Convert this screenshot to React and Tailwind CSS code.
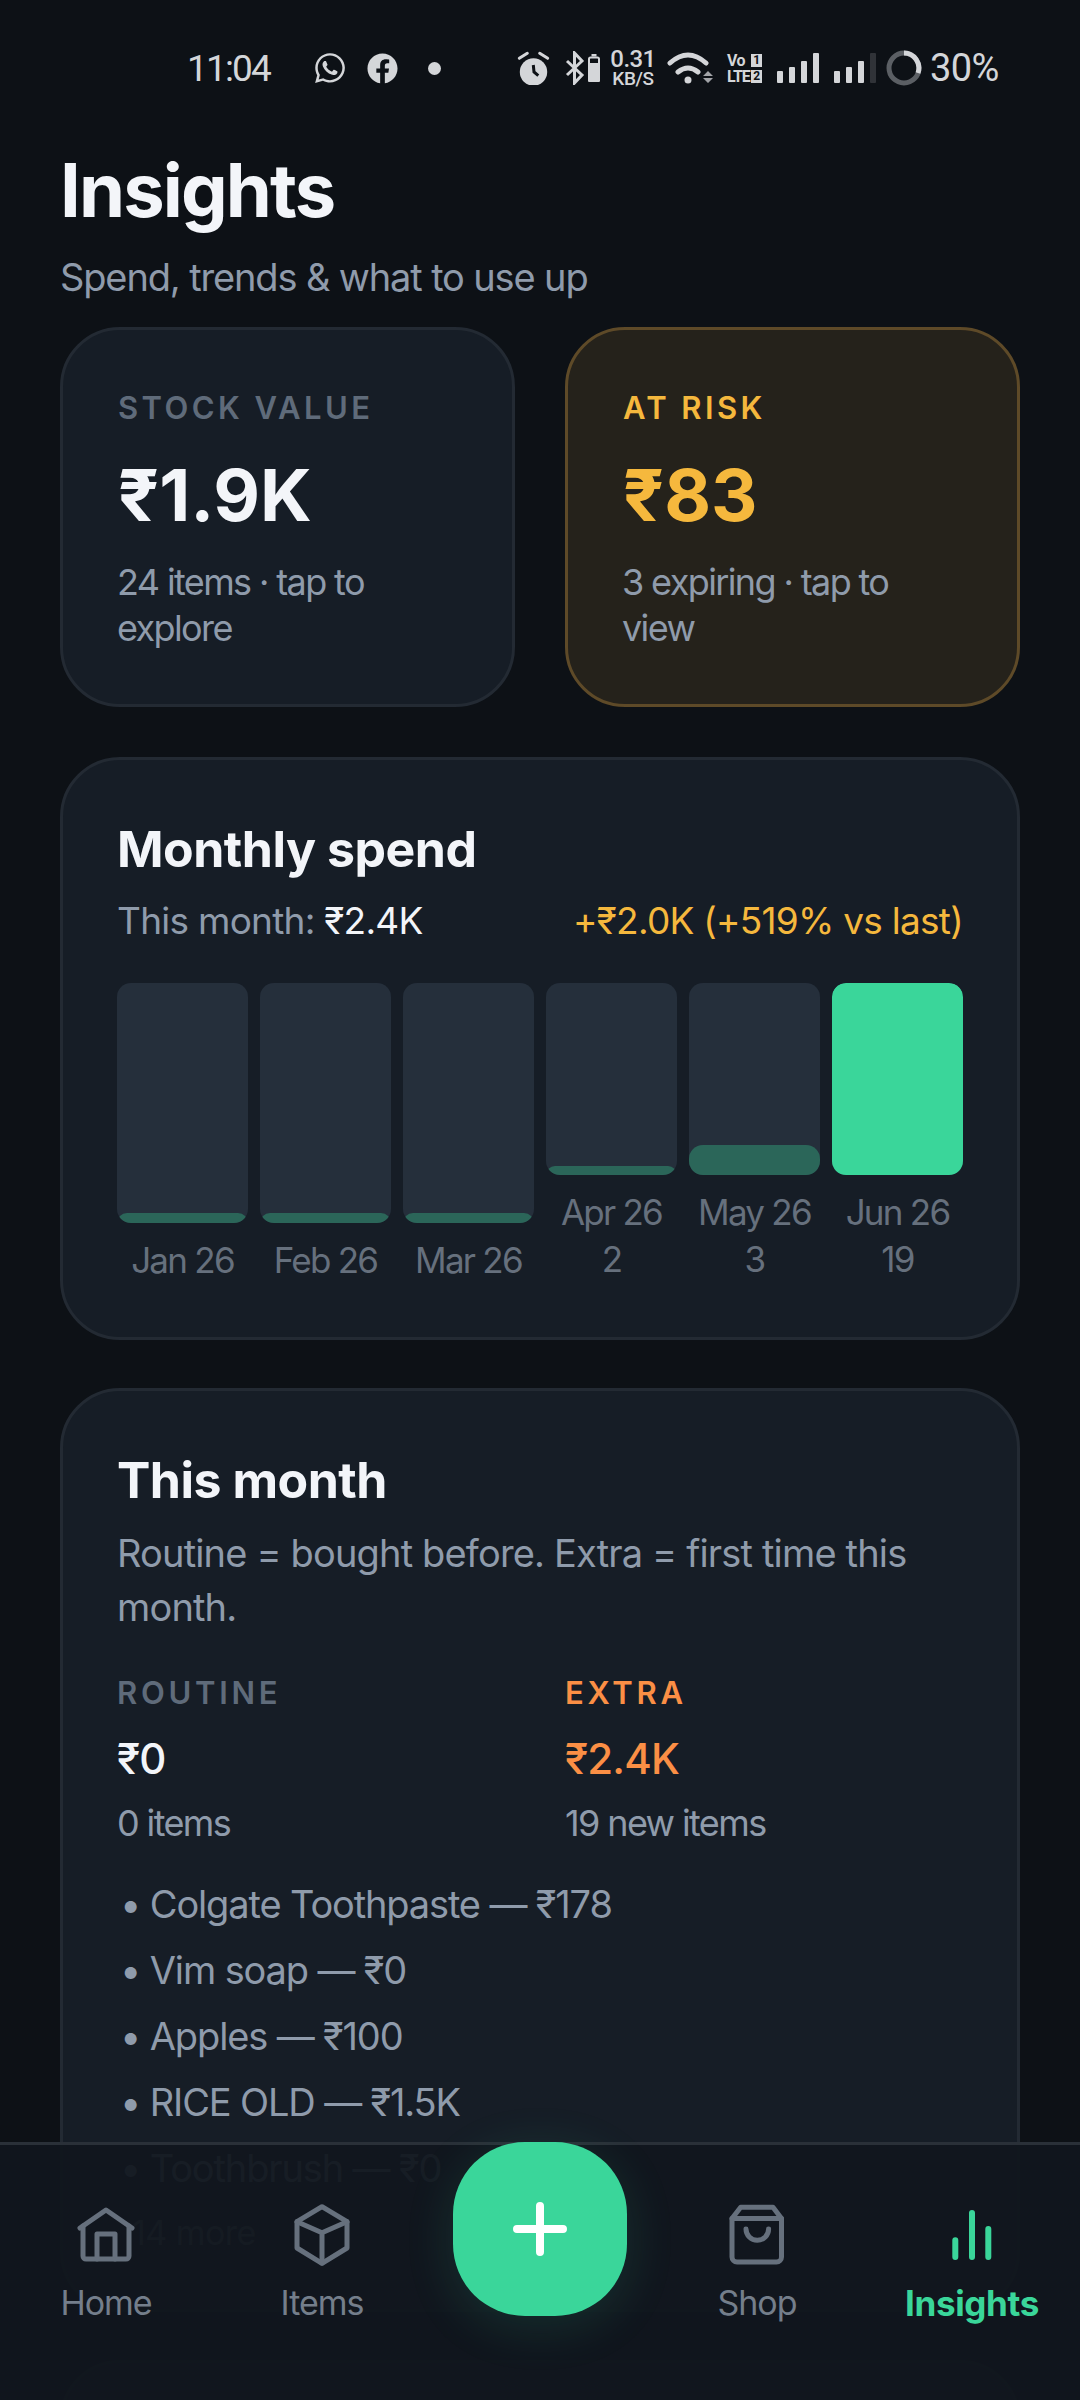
import React from 'react';
import { FaWhatsapp, FaFacebook } from 'react-icons/fa';

const bars = [
  { label: 'Jan 26', fill: 'h-[10px] bg-[#2b6659]' },
  { label: 'Feb 26', fill: 'h-[10px] bg-[#2b6659]' },
  { label: 'Mar 26', fill: 'h-[10px] bg-[#2b6659]' },
  { label: 'Apr 26', count: '2', fill: 'h-[9px] bg-[#2b6659]' },
  { label: 'May 26', count: '3', fill: 'h-[30px] bg-[#2b6659]' },
  { label: 'Jun 26', count: '19', fill: 'h-full bg-[#3ad69a]' },
];

const items = ['Colgate Toothpaste — ₹178', 'Vim soap — ₹0', 'Apples — ₹100', 'RICE OLD — ₹1.5K', 'Toothbrush — ₹0'];

function Signal({ className, dim }) {
  return (
    <div className={`flex items-end gap-[6px] h-[30px] ${className}`}>
      <span className="w-[6px] h-[12px] bg-[#d4d6d9] rounded-[1px]" />
      <span className="w-[6px] h-[16px] bg-[#d4d6d9] rounded-[1px]" />
      <span className="w-[6px] h-[22px] bg-[#d4d6d9] rounded-[1px]" />
      <span className={`w-[6px] h-[30px] rounded-[1px] ${dim ? 'bg-[#303338]' : 'bg-[#d4d6d9]'}`} />
    </div>
  );
}

function StatusBar() {
  return (
    <div className="h-[136px] flex items-center pl-[187px] text-[#d4d6d9] font-['Roboto',sans-serif]">
      <span className="text-[37px] leading-none w-[126px] tracking-[-0.05em]">11:04</span>
      <FaWhatsapp className="w-[34px] h-[34px]" />
      <FaFacebook className="w-[31px] h-[31px] ml-[20px]" />
      <span className="w-[13px] h-[13px] rounded-full bg-[#d4d6d9] ml-[30px]" />
      <svg className="w-[34px] h-[34px] ml-[76px]" viewBox="0 0 34 34" fill="currentColor">
        <circle cx="16.5" cy="21" r="13.7" />
        <path d="M2.3 7.3L10.3 2.3M30.7 7.3L22.7 2.3" stroke="currentColor" strokeWidth="3" strokeLinecap="round" />
        <path d="M16.3 14L17 21L21.3 24.7" stroke="#0d1116" strokeWidth="3" fill="none" />
      </svg>
      <svg className="w-[20px] h-[34px] ml-[14px]" viewBox="0 0 20 34" fill="none" stroke="currentColor" strokeWidth="3">
        <path d="M2 10L17 24L9.5 32V2L17 10L2 24" />
      </svg>
      <svg className="w-[12px] h-[28px] ml-[3px]" viewBox="0 0 12 28" fill="currentColor">
        <rect x="3.5" y="0" width="5" height="2.5" />
        <rect x="1" y="3.5" width="10" height="23.5" rx="1.5" fill="none" stroke="currentColor" strokeWidth="2" />
        <rect x="0" y="9" width="12" height="19" rx="1.5" />
      </svg>
      <div className="flex flex-col items-center ml-[11px] w-[44px] font-medium">
        <span className="text-[24px] leading-[20px]">0.31</span>
        <span className="text-[19px] leading-[19px] tracking-[-0.02em]">KB/S</span>
      </div>
      <svg className="w-[46px] h-[36px] ml-[12px]" viewBox="0 0 46 36" fill="none" stroke="currentColor" strokeWidth="5" strokeLinecap="round">
        <path d="M3 13Q21 -3 39 13M11 22Q21 14 31 22" />
        <circle cx="21" cy="30" r="3.5" fill="currentColor" stroke="none" />
        <path d="M41 21l5 5H36zM36 28h10l-5 5z" fill="currentColor" stroke="none" opacity="0.75" />
      </svg>
      <div className="flex flex-col gap-[3px] ml-[14px] w-[35px] text-[16px] leading-[13px] font-bold">
        <div className="flex justify-between items-center">
          <span>Vo</span>
          <span className="w-[11px] h-[13px] bg-[#d4d6d9] text-[#0d1116] text-center text-[12px]">1</span>
        </div>
        <div className="flex justify-between items-center">
          <span className="tracking-[-0.06em]">LTE</span>
          <span className="w-[11px] h-[13px] bg-[#d4d6d9] text-[#0d1116] text-center text-[12px]">2</span>
        </div>
      </div>
      <Signal className="ml-[15px]" />
      <Signal className="ml-[15px]" dim />
      <svg className="w-[36px] h-[36px] ml-[10px]" viewBox="0 0 36 36" fill="none" strokeWidth="5">
        <circle cx="18" cy="18" r="15" stroke="#5b5f64" />
        <path d="M18 3a15 15 0 0 1 14 20" stroke="#d4d6d9" />
      </svg>
      <span className="text-[38px] leading-none ml-[8px]">30%</span>
    </div>
  );
}

function HomeIcon() {
  return (
    <svg className="w-[60px] h-[60px] mt-[4px]" viewBox="0 0 60 60" fill="none" stroke="currentColor" strokeWidth="5" strokeLinecap="round" strokeLinejoin="round">
      <path d="M4 22L30 4L56 22" />
      <path d="M7 20V50a3 3 0 0 0 3 3H50a3 3 0 0 0 3-3V20" />
      <path d="M21 53V28H39V53" />
    </svg>
  );
}

function BoxIcon() {
  return (
    <svg className="w-[64px] h-[66px]" viewBox="0 0 64 66" fill="none" stroke="currentColor" strokeWidth="5" strokeLinecap="round" strokeLinejoin="round">
      <path d="M32 4.7L57 19.7V46L32 61.3L7 46V19.7Z" />
      <path d="M7 19.7L32 30.7L57 19.7M32 30.7V61" />
    </svg>
  );
}

function BagIcon() {
  return (
    <svg className="w-[60px] h-[66px]" viewBox="0 0 60 66" fill="none" stroke="currentColor" strokeWidth="5" strokeLinecap="round" strokeLinejoin="round">
      <path d="M13.7 5.3H46L54.5 16.5V55a5 5 0 0 1-5 5H10a5 5 0 0 1-5-5V16.5Z" />
      <path d="M5 16.5H54.5" />
      <path d="M19 27a11.3 11.3 0 0 0 22.6 0" />
    </svg>
  );
}

function BarsIcon() {
  return (
    <svg className="w-[66px] h-[60px] mt-[3px]" viewBox="0 0 66 60" fill="none" stroke="currentColor" strokeWidth="6" strokeLinecap="round">
      <path d="M16.3 35.3V52M33 8V52M49.3 24V52" />
    </svg>
  );
}

function NavItem({ icon: Icon, label, active, className }) {
  return (
    <div className={`flex flex-col items-center ${className || ''}`}>
      <div className={`h-[66px] ${active ? 'text-[#3ad69a]' : 'text-[#66707d]'}`}>
        <Icon />
      </div>
      <span className={`leading-[44px] mt-[13px] ${active ? 'text-[35px] font-bold tracking-[-0.01em] text-[#3ad69a]' : 'text-[34px] tracking-[-0.03em] text-[#747e8b]'}`}>{label}</span>
    </div>
  );
}

export default function App() {
  return (
    <div className="relative w-[1080px] h-[2400px] overflow-hidden bg-[#0d1116] font-['Inter',sans-serif] tracking-[-0.035em]">
      <StatusBar />

      <div className="px-[60px]">
        <h1 className="text-[74px] leading-[90px] font-bold text-[#f3f5f9] tracking-[-0.025em] mt-[9px]">Insights</h1>
        <p className="text-[38px] leading-[50px] text-[#8f9bab] mt-[17px] tracking-[-0.03em]">Spend, trends &amp; what to use up</p>

        <div className="grid grid-cols-2 gap-[50px] mt-[25px]">
          <div className="h-[380px] rounded-[60px] border-[3px] border-[#232a33] bg-[#161d26] px-[54px] pt-[58px]">
            <div className="text-[31px] leading-[40px] font-semibold tracking-[0.11em] text-[#5f6b7a] ml-[1px]">STOCK VALUE</div>
            <div className="text-[72px] leading-[90px] font-bold text-[#f3f5f9] mt-[22px] ml-[1px] tracking-normal">₹1.9K</div>
            <div className="text-[36px] leading-[46px] text-[#8f9bab] mt-[19px] tracking-[-0.045em]">24 items · tap to explore</div>
          </div>
          <div className="h-[380px] rounded-[60px] border-[3px] border-[#5e4a28] bg-[#25221b] px-[54px] pt-[58px]">
            <div className="text-[31px] leading-[40px] font-semibold tracking-[0.11em] text-[#f5b83d] ml-[1px]">AT RISK</div>
            <div className="text-[72px] leading-[90px] font-bold text-[#f5b83d] mt-[22px] ml-[1px] tracking-normal">₹83</div>
            <div className="text-[36px] leading-[46px] text-[#8f9bab] mt-[19px] tracking-[-0.045em]">3 expiring · tap to view</div>
          </div>
        </div>

        <div className="h-[583px] mt-[50px] rounded-[60px] border-[3px] border-[#232a33] bg-[#161d26] px-[54px] pt-[59px]">
          <div className="text-[50px] leading-[60px] font-bold text-[#f3f5f9] tracking-[-0.01em]">Monthly spend</div>
          <div className="flex justify-between text-[37px] leading-[50px] mt-[17px] w-[846px] tracking-[-0.02em]">
            <span className="text-[#8f9bab]">This month: <span className="text-[#f3f5f9]">₹2.4K</span></span>
            <span className="text-[#f5b83d]">+₹2.0K (+519% vs last)</span>
          </div>
          <div className="flex gap-[12px] mt-[37px] w-[846px]">
            {bars.map((b) => (
              <div key={b.label} className="flex-1 flex flex-col items-center">
                <div className={`w-full flex flex-col justify-end overflow-hidden rounded-[14px] bg-[#252f3b] ${b.count ? 'h-[192px]' : 'h-[240px]'}`}>
                  <div className={`w-full rounded-t-[14px] ${b.fill}`} />
                </div>
                <div className="text-[35px] leading-[47px] text-[#66707d] text-center mt-[14px] tracking-[-0.05em] whitespace-nowrap">{b.label}</div>
                {b.count && <div className="text-[35px] leading-[47px] text-[#66707d] text-center tracking-[-0.05em]">{b.count}</div>}
              </div>
            ))}
          </div>
        </div>

        <div className="mt-[48px] rounded-[60px] border-[3px] border-[#232a33] bg-[#161d26] px-[54px] pt-[59px] pb-[44px]">
          <div className="text-[50px] leading-[60px] font-bold text-[#f3f5f9] tracking-[-0.01em]">This month</div>
          <p className="text-[38px] leading-[54px] text-[#8f9bab] mt-[16px] tracking-[-0.022em]">Routine = bought before. Extra = first time this month.</p>
          <div className="grid grid-cols-2 gap-[50px] mt-[39px] w-[846px]">
            <div>
              <div className="text-[31px] leading-[40px] font-semibold tracking-[0.12em] text-[#5f6b7a]">ROUTINE</div>
              <div className="text-[42px] leading-[50px] font-medium text-[#f3f5f9] mt-[21px] tracking-[-0.02em]">₹0</div>
              <div className="text-[36px] leading-[46px] text-[#8f9bab] mt-[16px] tracking-[-0.045em]">0 items</div>
            </div>
            <div>
              <div className="text-[31px] leading-[40px] font-semibold tracking-[0.12em] text-[#fb8f45]">EXTRA</div>
              <div className="text-[42px] leading-[50px] font-medium text-[#fb8f45] mt-[21px] tracking-[-0.02em]">₹2.4K</div>
              <div className="text-[36px] leading-[46px] text-[#8f9bab] mt-[16px] tracking-[-0.045em]">19 new items</div>
            </div>
          </div>
          <ul className="mt-[25px]">
            {items.map((t) => (
              <li key={t} className="text-[38px] leading-[66px] text-[#8f9bab] pl-[3px] tracking-[-0.03em]">• {t}</li>
            ))}
            <li className="text-[34px] leading-[64px] text-[#66707d] pl-[15px]">14 more</li>
          </ul>
        </div>

        <div className="h-[200px] mt-[48px] rounded-[60px] border-[3px] border-[#232a33] bg-[#161d26]" />
      </div>

      {/* bottom nav sits over the scrolling content */}
      <div className="absolute left-0 right-0 bottom-0 h-[258px] border-t-[3px] border-[#2a3038] bg-[#11161e]/95 grid grid-cols-5 pt-[57px]">
        <NavItem icon={HomeIcon} label="Home" className="pr-[4px]" />
        <NavItem icon={BoxIcon} label="Items" className="pr-[4px]" />
        <div />
        <NavItem icon={BagIcon} label="Shop" className="pl-[2px]" />
        <NavItem icon={BarsIcon} label="Insights" active />
      </div>
      <div className="absolute left-[453px] top-[2142px] w-[174px] h-[174px] rounded-[72px] bg-[#3ad69a] shadow-[0_10px_50px_rgba(58,214,154,0.14)] flex items-center justify-center">
        <svg className="w-[54px] h-[54px]" viewBox="0 0 54 54" fill="none" stroke="white" strokeWidth="8" strokeLinecap="round">
          <path d="M4 27H50M27 4V50" />
        </svg>
      </div>
    </div>
  );
}
